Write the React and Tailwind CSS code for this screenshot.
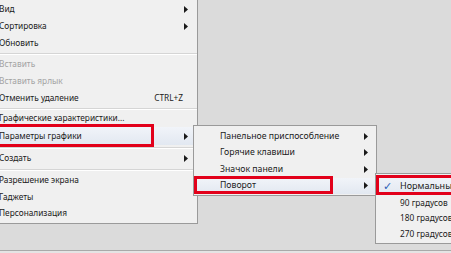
import React from 'react';

const font = { fontFamily: '"Noto Sans", "Open Sans", sans-serif' };

function Arrow() {
  return (
    <svg width="4" height="7" viewBox="0 0 4 7" className="shrink-0">
      <path d="M0 0 L4 3.5 L0 7 Z" fill="#1a1a1a" />
    </svg>
  );
}

function Sep({ h }) {
  return (
    <div className={`flex flex-col justify-center ${h}`}>
      <div className="h-px bg-[#d5d5d5]" />
      <div className="h-px bg-white" />
    </div>
  );
}

function Item({ label, h = 'h-[17px]', arrow, shortcut, disabled, active }) {
  return (
    <div
      className={`flex items-center pl-[3px] pr-[9px] ${h} ${
        active ? 'bg-gradient-to-b from-[#f1f4f9] to-[#e2e8f1]' : ''
      } ${disabled ? 'text-[#a3a3a3]' : 'text-[#1b1b1b]'}`}
    >
      <span className="flex-1 whitespace-nowrap">{label}</span>
      {shortcut && <span className="mr-[5px]">{shortcut}</span>}
      {arrow && <Arrow />}
    </div>
  );
}

function SubItem({ label, active }) {
  return (
    <div
      className={`flex items-center pl-[26px] pr-[8px] h-[16.5px] ${
        active ? 'bg-gradient-to-b from-[#f1f4f9] to-[#e2e8f1]' : ''
      }`}
    >
      <span className="flex-1 whitespace-nowrap">{label}</span>
      <Arrow />
    </div>
  );
}

export default function App() {
  return (
    <div
      className="relative w-[451px] h-[253px] overflow-hidden bg-[#dbdbdb] leading-none flex flex-col"
      style={font}
    >
      <div className="flex-1" />
      <div className="h-px bg-[#a9a9a9]" />
      <div className="h-[2px] bg-[#e4e4e4]" />

      {/* main context menu */}
      <div className="absolute left-[-4px] top-0 w-[202px] h-[224px] bg-[#f0f0f0] border-r border-b border-[#9a9a9a] flex flex-col text-[8.3px]">
        <Item label="Вид" h="h-[18px]" arrow />
        <Item label="Сортировка" arrow />
        <Item label="Обновить" />
        <Sep h="h-[4px]" />
        <Item label="Вставить" disabled />
        <Item label="Вставить ярлык" disabled />
        <Item label="Отменить удаление" shortcut="CTRL+Z" />
        <Sep h="h-[3px]" />
        <Item label="Графические характеристики..." />
        <Item label="Параметры графики" h="h-[18px]" arrow active />
        <Sep h="h-[5px]" />
        <Item label="Создать" arrow />
        <Sep h="h-[5px]" />
        <Item label="Разрешение экрана" />
        <Item label="Гаджеты" h="h-[16px]" />
        <Item label="Персонализация" h="h-[16px]" />
      </div>

      {/* graphics options submenu */}
      <div className="absolute left-[193px] top-[125px] w-[184px] h-[71px] bg-[#f0f0f0] border border-[#9a9a9a] pt-[2px] flex flex-col text-[#1b1b1b] text-[8.7px]">
        <SubItem label="Панельное приспособление" />
        <SubItem label="Горячие клавиши" />
        <SubItem label="Значок панели" />
        <SubItem label="Поворот" active />
      </div>

      {/* rotation submenu */}
      <div className="absolute left-[375px] top-[173px] w-[100px] h-[71px] bg-[#f0f0f0] border border-[#9a9a9a] pt-[2px] flex flex-col text-[#1b1b1b]">
        <div className="flex items-center h-[19px] pl-[7px] bg-gradient-to-b from-[#f1f4f9] to-[#e2e8f1] text-[9px]">
          <span className="w-[17px] text-[#2a5fb8] text-[11px]">✓</span>
          <span className="whitespace-nowrap">Нормальные</span>
        </div>
        <div className="flex items-center h-[15.5px] pl-[24px] text-[8.3px] whitespace-nowrap">90 градусов</div>
        <div className="flex items-center h-[15.5px] pl-[24px] text-[8.3px] whitespace-nowrap">180 градусов</div>
        <div className="flex items-center h-[15.5px] pl-[24px] text-[8.3px] whitespace-nowrap">270 градусов</div>
      </div>

      {/* red annotation frames */}
      <div className="absolute left-[-3px] top-[124px] w-[157px] h-[23px] border-[3px] border-[#e2001a]" />
      <div className="absolute left-[194px] top-[176px] w-[139px] h-[18px] border-[3px] border-[#e2001a]" />
      <div className="absolute left-[376px] top-[175px] w-[90px] h-[20px] border-[3px] border-[#e2001a]" />
    </div>
  );
}
